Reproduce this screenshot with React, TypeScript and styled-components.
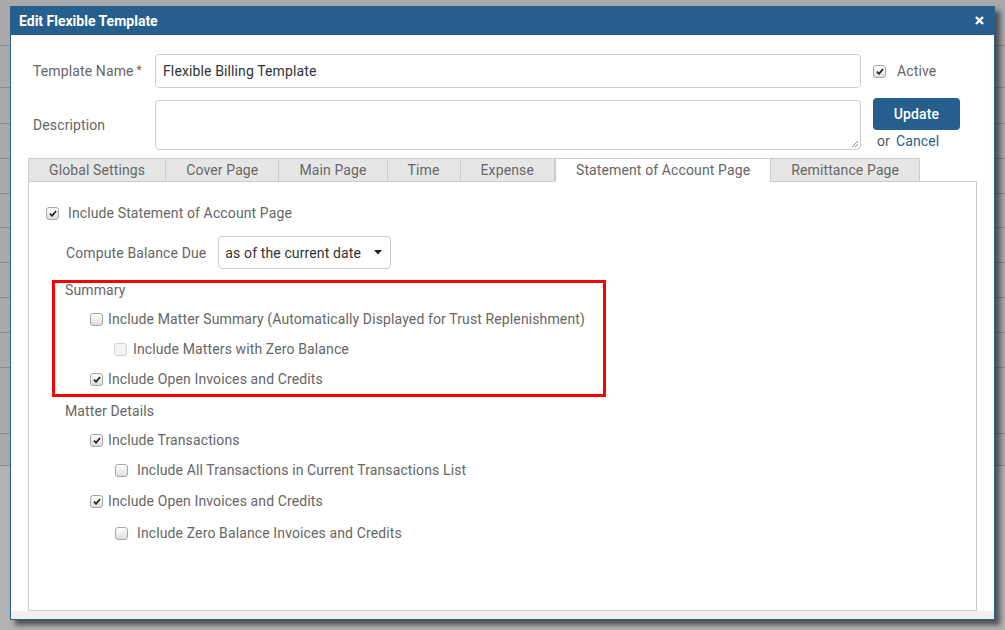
import * as React from "react";
import styled, { createGlobalStyle } from "styled-components";

const GlobalStyle = createGlobalStyle`
  html, body {
    margin: 0;
    padding: 0;
    background: #a9a9a9;
    font-family: Roboto, "Liberation Sans", Arial, sans-serif;
    font-size: 14px;
    letter-spacing: 0.12px;
  }
`;

const Page = styled.div`
  position: relative;
  width: 1005px;
  height: 630px;
  overflow: hidden;
`;

const Backdrop = styled.div`
  display: flex;
  flex-flow: column nowrap;
  height: 100%;
`;

const BackRow = styled.div<{ h: number; light?: boolean }>`
  height: ${p => p.h}px;
  flex: none;
  box-sizing: border-box;
  border-bottom: 1px solid ${p => (p.light ? "transparent" : "#8c8c8c")};
  background: ${p => (p.light ? "#b2b2b2" : "#a9a9a9")};
`;

const Modal = styled.div`
  position: absolute;
  left: 10px;
  top: 6px;
  width: 985px;
  height: 614px;
  box-sizing: border-box;
  border: 1px solid #265f8e;
  border-top: none;
  background: #fff;
  display: flex;
  flex-flow: column nowrap;
  box-shadow: 5px 5px 5px rgba(0, 0, 0, 0.55);
`;

const Header = styled.div`
  height: 29px;
  flex: none;
  margin: 0 -1px;
  background: #265f8e;
  color: #fff;
  display: flex;
  align-items: center;
  justify-content: space-between;
  padding: 0 11px 0 9px;
`;

const Title = styled.div`
  font-weight: 700;
  font-size: 14px;
  letter-spacing: 0;
`;

const Close = styled.span`
  display: flex;
  align-items: center;
`;

const Body = styled.div`
  flex: 1;
  overflow: hidden;
  padding: 19px 17px 0 17px;
  display: flex;
  flex-flow: column nowrap;
`;

const Footer = styled.div`
  height: 8px;
  flex: none;
  background: #f0f0f0;
`;

const FormGrid = styled.div`
  display: grid;
  grid-template-columns: 110px 706px 86px;
  grid-template-rows: 34px 50px;
  column-gap: 12px;
  row-gap: 12px;
  padding-left: 5px;
`;

const Label = styled.label`
  color: #666;
  display: flex;
  align-items: center;
  font-size: 14px;
`;

const Req = styled.span`
  color: #8a5a3a;
  margin-left: 3px;
  font-size: 12px;
  align-self: flex-start;
  margin-top: 9px;
`;

const TextInput = styled.div`
  box-sizing: border-box;
  border: 1px solid #ccc;
  border-radius: 4px;
  padding: 0 7px;
  display: flex;
  align-items: center;
  color: #333;
  font-size: 14px;
`;

const TextArea = styled.div`
  box-sizing: border-box;
  border: 1px solid #ccc;
  border-radius: 4px;
  position: relative;
`;

const Grip = styled.svg`
  position: absolute;
  right: 1px;
  bottom: 1px;
`;

const SideCell = styled.div<{ top?: boolean }>`
  display: flex;
  flex-flow: column nowrap;
  justify-content: ${p => (p.top ? "flex-start" : "center")};
  align-items: flex-start;
  margin-top: ${p => (p.top ? "-2px" : "0")};
`;

const UpdateButton = styled.button`
  width: 87px;
  height: 34px;
  border: none;
  border-radius: 4px;
  background: #265f8e;
  color: #fff;
  font-family: inherit;
  font-size: 14px;
  font-weight: 500;
  letter-spacing: 0.12px;
  cursor: pointer;
`;

const OrCancel = styled.div`
  color: #555;
  margin-top: 2px;
  padding-left: 4px;
  line-height: 18px;

  a {
    color: #265f8e;
    margin-left: 6px;
    cursor: pointer;
  }
`;

const Tabs = styled.div`
  display: flex;
  flex-flow: row nowrap;
  margin-top: 8px;
  position: relative;
  z-index: 1;
`;

const Tab = styled.div<{ active?: boolean }>`
  height: 24px;
  box-sizing: border-box;
  padding: 0 20px;
  display: flex;
  align-items: center;
  border: 1px solid #ccc;
  border-left-width: ${p => (p.active ? "1px" : "0")};
  border-bottom-color: ${p => (p.active ? "#fff" : "#ccc")};
  background: ${p => (p.active ? "#fff" : "#e6e6e6")};
  color: #666;
  font-size: 14px;
  margin-bottom: -1px;

  &:first-child {
    border-left-width: 1px;
  }
`;

const Panel = styled.div`
  flex: 1;
  border: 1px solid #ccc;
  padding: 21px 17px 0 17px;
  display: flex;
  flex-flow: column nowrap;
  align-items: flex-start;
`;

const Box = styled.span<{ disabled?: boolean }>`
  width: 11px;
  height: 11px;
  flex: none;
  border: 1px solid ${p => (p.disabled ? "#d0d0d0" : "#a6a6a6")};
  border-radius: 3px;
  background: ${p =>
    p.disabled ? "#f4f4f4" : "linear-gradient(#ffffff, #dedede)"};
  display: flex;
  align-items: center;
  justify-content: center;
`;

const CheckRow = styled.div<{ indent?: number; gap?: number; h?: number }>`
  display: flex;
  align-items: center;
  height: ${p => p.h ?? 30}px;
  padding-left: ${p => p.indent ?? 0}px;
  gap: ${p => p.gap ?? 5}px;
  color: #666;
  font-size: 14px;
  white-space: nowrap;
`;

const ComputeRow = styled.div`
  display: flex;
  align-items: center;
  gap: 12px;
  margin: 13px 0 0 20px;
  color: #666;
`;

const Select = styled.div`
  width: 173px;
  height: 33px;
  box-sizing: border-box;
  border: 1px solid #ccc;
  border-radius: 4px;
  display: flex;
  align-items: center;
  justify-content: space-between;
  padding: 0 8px 0 6px;
  color: #333;
`;

const Section = styled.div<{ highlight?: boolean }>`
  width: 554px;
  box-sizing: border-box;
  margin-left: 6px;
  border: 3px solid ${p => (p.highlight ? "#ff0000" : "transparent")};
  padding: 0 0 0 10px;
`;

const SectionTitle = styled.div`
  color: #666;
  line-height: 14px;
  margin-bottom: 7px;
`;

function Check({ checked, disabled }: { checked?: boolean; disabled?: boolean }) {
  return (
    <Box disabled={disabled}>
      {checked && (
        <svg width="8" height="7" viewBox="0 0 9 8">
          <path
            d="M1 4.2 L3.4 6.6 L8 1.2"
            fill="none"
            stroke="#222"
            strokeWidth="2"
          />
        </svg>
      )}
    </Box>
  );
}

const backRows = [46, 42, 36, 35, 35, 34, 35, 35, 35, 35, 66, 32];

export default function App() {
  return (
    <Page>
      <GlobalStyle />
      <Backdrop>
        {backRows.map((h, i) => (
          <BackRow key={i} h={h} />
        ))}
        <BackRow h={200} light />
      </Backdrop>
      <Modal>
        <Header>
          <Title>Edit Flexible Template</Title>
          <Close>
            <svg width="9" height="9" viewBox="0 0 9 9">
              <path d="M1 1 L8 8 M8 1 L1 8" stroke="#fff" strokeWidth="2.4" />
            </svg>
          </Close>
        </Header>
        <Body>
          <FormGrid>
            <Label>
              Template Name<Req>*</Req>
            </Label>
            <TextInput>Flexible Billing Template</TextInput>
            <SideCell>
              <CheckRow gap={11} h={20}>
                <Check checked />
                Active
              </CheckRow>
            </SideCell>
            <Label>Description</Label>
            <TextArea>
              <Grip width="8" height="8" viewBox="0 0 8 8">
                <path d="M7 1 L1 7 M7 4 L4 7" stroke="#888" strokeWidth="1" />
              </Grip>
            </TextArea>
            <SideCell top>
              <UpdateButton>Update</UpdateButton>
              <OrCancel>
                or<a>Cancel</a>
              </OrCancel>
            </SideCell>
          </FormGrid>
          <Tabs>
            <Tab>Global Settings</Tab>
            <Tab>Cover Page</Tab>
            <Tab>Main Page</Tab>
            <Tab>Time</Tab>
            <Tab>Expense</Tab>
            <Tab active>Statement of Account Page</Tab>
            <Tab>Remittance Page</Tab>
          </Tabs>
          <Panel>
            <CheckRow gap={9} h={20}>
              <Check checked />
              Include Statement of Account Page
            </CheckRow>
            <ComputeRow>
              Compute Balance Due
              <Select>
                as of the current date
                <svg width="8" height="5" viewBox="0 0 8 5">
                  <path d="M0 0 L8 0 L4 4.5 Z" fill="#222" />
                </svg>
              </Select>
            </ComputeRow>
            <Section highlight style={{ marginTop: 11 }}>
              <SectionTitle>Summary</SectionTitle>
              <CheckRow indent={25}>
                <Check />
                Include Matter Summary (Automatically Displayed for Trust Replenishment)
              </CheckRow>
              <CheckRow indent={49} gap={6}>
                <Check disabled />
                Include Matters with Zero Balance
              </CheckRow>
              <CheckRow indent={25}>
                <Check checked />
                Include Open Invoices and Credits
              </CheckRow>
            </Section>
            <Section style={{ marginTop: 4 }}>
              <SectionTitle>Matter Details</SectionTitle>
              <CheckRow indent={25}>
                <Check checked />
                Include Transactions
              </CheckRow>
              <CheckRow indent={50} gap={9}>
                <Check />
                Include All Transactions in Current Transactions List
              </CheckRow>
              <CheckRow indent={25} h={32}>
                <Check checked />
                Include Open Invoices and Credits
              </CheckRow>
              <CheckRow indent={50} gap={9} h={32}>
                <Check />
                Include Zero Balance Invoices and Credits
              </CheckRow>
            </Section>
          </Panel>
        </Body>
        <Footer />
      </Modal>
    </Page>
  );
}
